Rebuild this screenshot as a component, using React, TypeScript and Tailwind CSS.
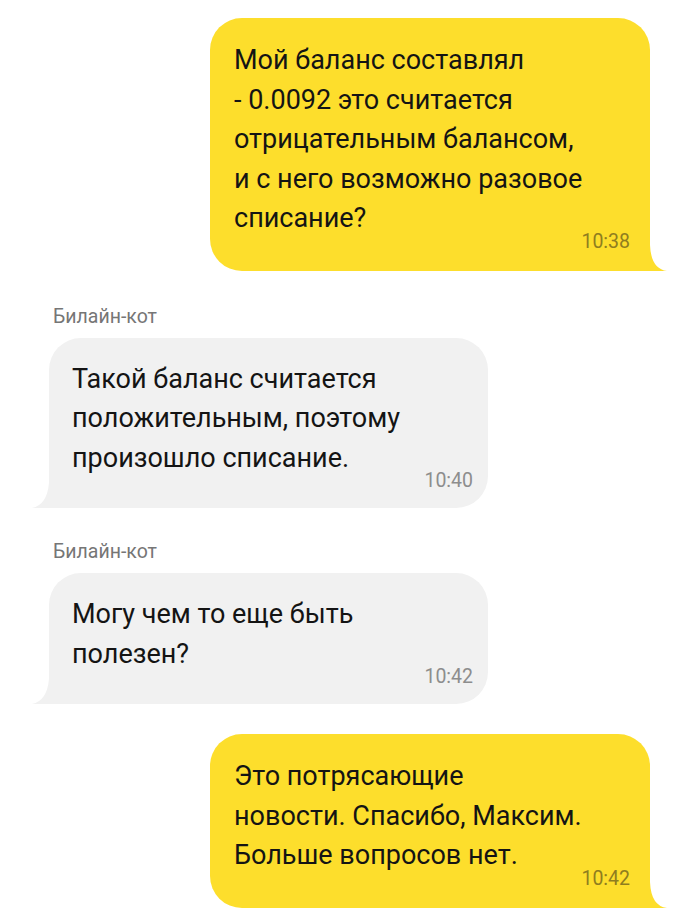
import type { ReactNode } from 'react';

type Msg =
  | { id: number; out: true; lines: string[]; time: string }
  | { id: number; out: false; author: string; lines: string[]; time: string };

const messages: Msg[] = [
  {
    id: 1,
    out: true,
    lines: [
      'Мой баланс составлял',
      '- 0.0092 это считается',
      'отрицательным балансом,',
      'и с него возможно разовое',
      'списание?',
    ],
    time: '10:38',
  },
  {
    id: 2,
    out: false,
    author: 'Билайн-кот',
    lines: ['Такой баланс считается', 'положительным, поэтому', 'произошло списание.'],
    time: '10:40',
  },
  {
    id: 3,
    out: false,
    author: 'Билайн-кот',
    lines: ['Могу чем то еще быть', 'полезен?'],
    time: '10:42',
  },
  {
    id: 4,
    out: true,
    lines: ['Это потрясающие', 'новости. Спасибо, Максим.', 'Больше вопросов нет.'],
    time: '10:42',
  },
];

function Lines({ lines }: { lines: string[] }) {
  return (
    <div className="text-[27px] leading-[39.5px] text-[#141414]">
      {lines.map((l, i) => (
        <div key={i} className="whitespace-nowrap">
          {l}
        </div>
      ))}
    </div>
  );
}

function Outgoing({ children, time }: { children: ReactNode; time: string }) {
  return (
    <div className="relative mr-[50px] ml-auto w-[440px] rounded-[32px] rounded-br-none bg-[#fdde2c] pt-[23px] pr-[20px] pb-[18px] pl-[24px]">
      {children}
      <div className="-mt-[8px] text-right text-[19.5px] leading-[22px] text-[#8f7d1f]">{time}</div>
      {/* tail */}
      <svg
        className="absolute bottom-0 left-full"
        width="17"
        height="26"
        viewBox="0 0 17 26"
      >
        <path d="M0 0 Q1 24 17 26 L0 26 Z" fill="#fdde2c" />
      </svg>
    </div>
  );
}

function Incoming({ author, children, time }: { author: string; children: ReactNode; time: string }) {
  return (
    <div>
      <div className="ml-[53px] text-[19.5px] leading-[22px] text-[#767676]">{author}</div>
      <div className="relative mt-[10px] ml-[49px] w-[439px] rounded-[32px] rounded-bl-none bg-[#f1f1f1] pt-[22px] pr-[15px] pb-[16px] pl-[23px]">
        {children}
        <div className="-mt-[8px] text-right text-[19.5px] leading-[22px] text-[#8d8d8d]">{time}</div>
        <svg
          className="absolute right-full bottom-0"
          width="17"
          height="25"
          viewBox="0 0 17 25"
        >
          <path d="M17 0 Q15 22 0 25 L17 25 Z" fill="#f1f1f1" />
        </svg>
      </div>
    </div>
  );
}

export default function App() {
  return (
    <div
      className="flex h-[920px] w-[700px] flex-col bg-white pt-[18px]"
      style={{ fontFamily: 'Roboto, "Noto Sans", sans-serif' }}
    >
      {messages.map((m, i) => {
        const gap = i === 0 ? '' : m.out ? 'mt-[30px]' : i === 1 ? 'mt-[35px]' : 'mt-[33px]';
        return (
          <div key={m.id} className={gap}>
            {m.out ? (
              <Outgoing time={m.time}>
                <Lines lines={m.lines} />
              </Outgoing>
            ) : (
              <Incoming author={m.author} time={m.time}>
                <Lines lines={m.lines} />
              </Incoming>
            )}
          </div>
        );
      })}
    </div>
  );
}
